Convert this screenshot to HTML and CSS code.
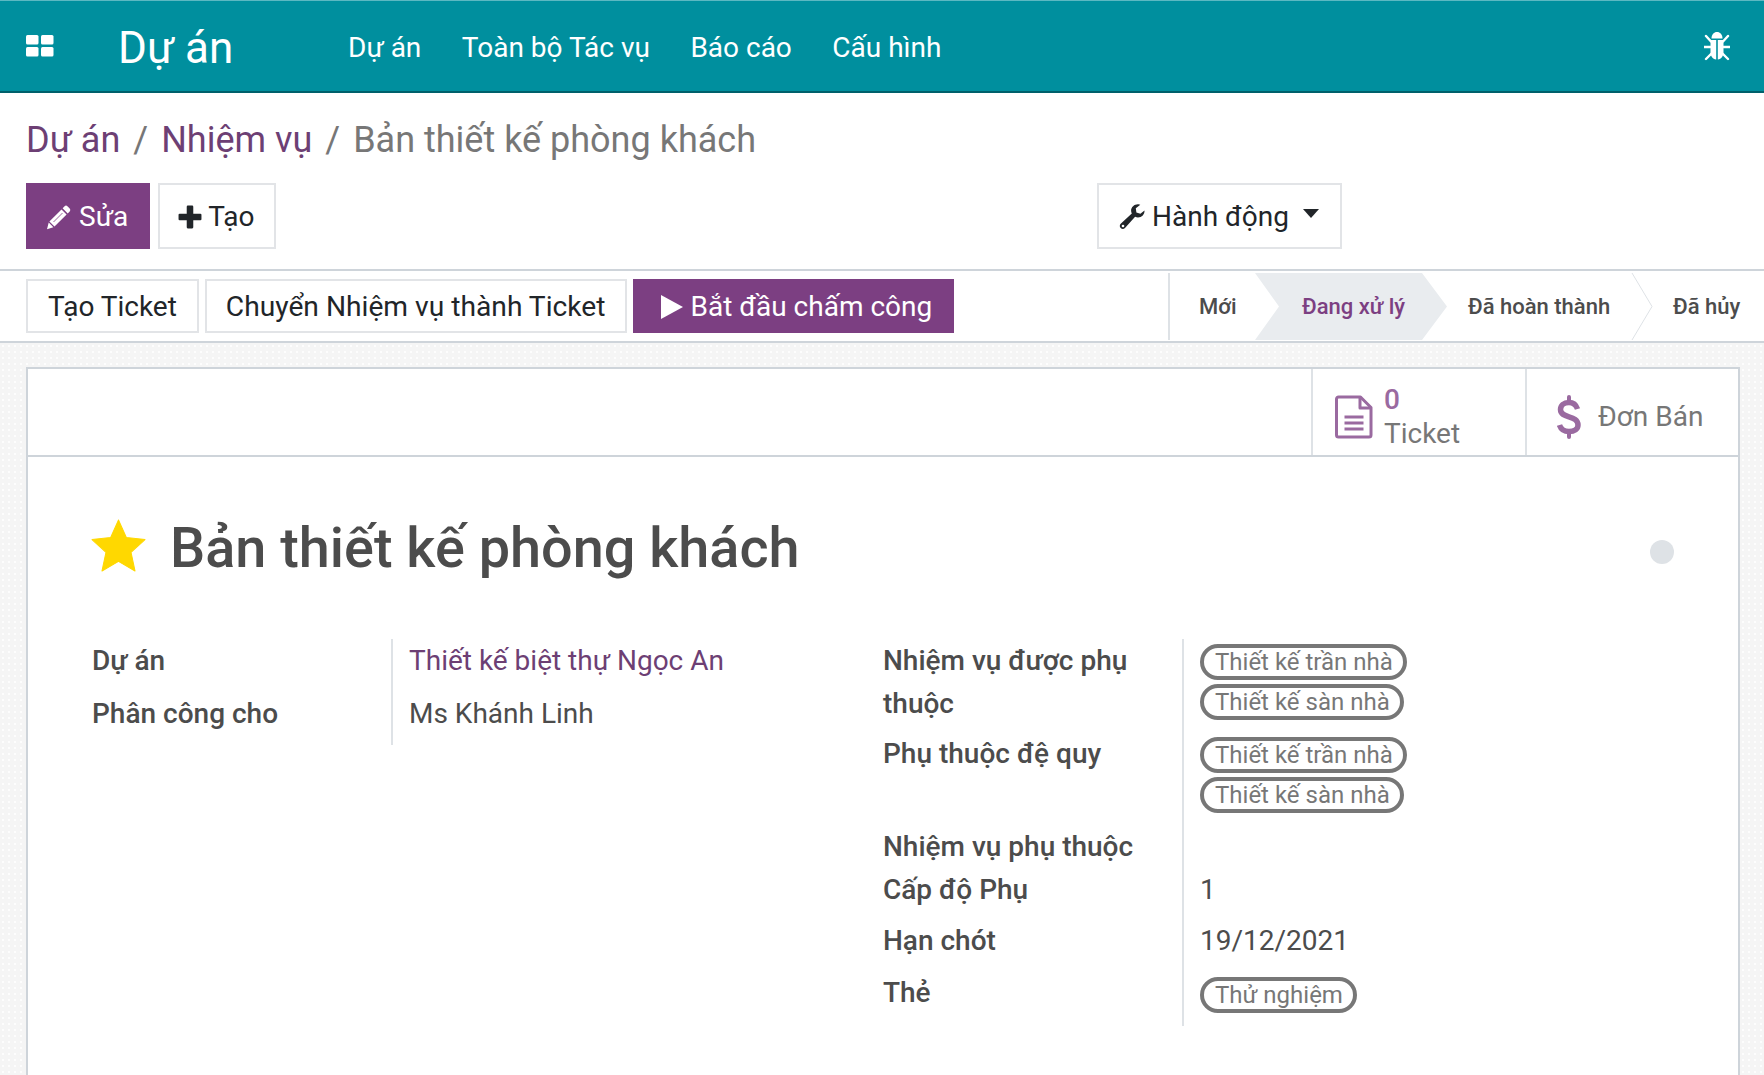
FILE: index.html
```html
<!DOCTYPE html>
<html lang="vi">
<head>
    <meta charset="UTF-8">
    <title>Dự án</title>
    <link rel="stylesheet" href="styles.css">
</head>
<body>

<header class="navbar">
    <svg class="apps-icon" viewBox="0 0 28 22" width="28" height="22"><rect x="0" y="0" width="12.5" height="9.5" rx="1.5"/><rect x="15" y="0" width="12.5" height="9.5" rx="1.5"/><rect x="0" y="12" width="12.5" height="9.5" rx="1.5"/><rect x="15" y="12" width="12.5" height="9.5" rx="1.5"/></svg>
    <a class="brand">Dự án</a>
    <nav class="menu">
        <a>Dự án</a>
        <a>Toàn bộ Tác vụ</a>
        <a>Báo cáo</a>
        <a>Cấu hình</a>
    </nav>
    <svg class="bug-icon" viewBox="0 0 26 30" width="26" height="30">
        <path d="M7.500 7.500C7.500 3.500 10 1 13 1s5.500 2.500 5.500 6.500z"/>
        <path d="M6.500 9h5.700v19.500C8.500 28 6.500 25 6.500 21zM13.800 9h5.700v12c0 4-2 7-5.700 7.500z"/>
        <path d="M2 5l5 5.500M24 5l-5 5.500M0.500 16h6M25.500 16h-6M2 28l5.500-5.500M24 28l-5.500-5.500" fill="none" stroke="#fff" stroke-width="2.400" stroke-linecap="round"/>
    </svg>
</header>

<section class="control-panel">
    <ol class="breadcrumb">
        <li><a>Dự án</a></li>
        <li class="sep">/</li>
        <li><a>Nhiệm vụ</a></li>
        <li class="sep">/</li>
        <li class="current">Bản thiết kế phòng khách</li>
    </ol>
    <div class="cp-buttons">
        <div class="cp-left">
            <button class="btn btn-primary btn-big btn-edit">
                <svg class="icon" viewBox="0 0 26 26" width="26" height="26">
                    <path fill="#fff" d="M18.600 2.300a2 2 0 0 1 2.800 0l2.300 2.300a2 2 0 0 1 0 2.800l-2 2-5.100-5.100zM15.500 5.400l5.100 5.100L8.500 22.600l-5.100-5.100zM2.700 18.600l4.700 4.700L1 25.200z"/>
                    <path d="M7.500 18l9-9" stroke="#7c3f82" stroke-width="0.800" fill="none"/>
                </svg>
                Sửa
            </button>
            <button class="btn btn-big btn-new">
                <svg class="icon" viewBox="1 1 22 22" width="24" height="24"><path fill="#212529" d="M10 1.500h4a1 1 0 0 1 1 1V9h6.500a1 1 0 0 1 1 1v4a1 1 0 0 1-1 1H15v6.500a1 1 0 0 1-1 1h-4a1 1 0 0 1-1-1V15H2.500a1 1 0 0 1-1-1v-4a1 1 0 0 1 1-1H9V2.500a1 1 0 0 1 1-1z"/></svg>
                Tạo
            </button>
        </div>
        <button class="btn btn-big btn-action">
            <svg class="icon" viewBox="0 0 28 28" width="28" height="28">
                <path fill="#212529" d="M26.500 7.500c.3 3.700-2.700 7-6.500 7-1 0-2-.2-2.900-.7L7 25c-1.300 1.300-3.200 1.200-4.300 0-1.200-1.100-1.200-3 0-4.300L13.800 10.500c-.5-1-.7-2-.7-3C13.100 4 16.500 1 20.300 1.200c.8 0 1.300.2 2 .5l-4.500 3.500.6 4.200 4 1.300z"/>
                <circle cx="5" cy="23" r="1.300" fill="#fff"/>
            </svg>
            Hành động
            <span class="caret"></span>
        </button>
    </div>
</section>

<section class="statusbar">
    <div class="status-actions">
        <button class="btn">Tạo Ticket</button>
        <button class="btn btn-convert">Chuyển Nhiệm vụ thành Ticket</button>
        <button class="btn btn-primary btn-start">
            <svg class="icon" viewBox="0 0 24 26" width="24" height="26"><path fill="#fff" d="M1 1l22 12L1 25z"/></svg>
            Bắt đầu chấm công
        </button>
    </div>
    <div class="stages">
        <span class="stage stage-first">Mới</span>
        <span class="stage stage-active">Đang xử lý</span>
        <span class="stage stage-done">Đã hoàn thành</span>
        <svg class="chevron" viewBox="0 0 24 67" width="24" height="67"><path d="M2 0l20 33.500L2 67" fill="none" stroke="#dee2e6" stroke-width="1"/></svg>
        <span class="stage stage-last">Đã hủy</span>
    </div>
</section>

<main class="content">
    <div class="sheet">
        <div class="button-box">
            <a class="stat">
                <svg class="stat-icon" viewBox="0 0 38 44" width="38" height="44">
                    <path d="M3.500 2h22L36 12.500V40a2 2 0 0 1-2 2H3.500a2 2 0 0 1-2-2V4a2 2 0 0 1 2-2z" fill="none" stroke="#9a6aa0" stroke-width="3" stroke-linejoin="round"/>
                    <path d="M25 2v11h11" fill="none" stroke="#9a6aa0" stroke-width="3" stroke-linejoin="round"/>
                    <path d="M9.500 22h19M9.500 28h19M9.500 34h19" stroke="#9a6aa0" stroke-width="3"/>
                </svg>
                <span class="stat-text"><b>0</b><span>Ticket</span></span>
            </a>
            <a class="stat stat-sale">
                <svg class="stat-icon" viewBox="0 0 24 44" width="24" height="44">
                    <path d="M12 2v6M12 36v6" stroke="#9a6aa0" stroke-width="4" stroke-linecap="round"/>
                    <path d="M20.500 14C19 9.500 16 7.500 12 7.500 6.500 7.500 3.500 10.500 3.500 14.500c0 9.500 17.500 5 17.500 15.500 0 4-3.500 6.500-9 6.500-4.500 0-8-2-9.500-6.500" fill="none" stroke="#9a6aa0" stroke-width="5.500"/>
                </svg>
                <span class="stat-label">Đơn Bán</span>
            </a>
        </div>
        <div class="sheet-body">
            <div class="title-row">
                <svg class="star" viewBox="0 0 54 52" width="55" height="53"><path fill="#ffd800" stroke="#ffd800" stroke-width="1" stroke-linejoin="round" d="M27 1l7.700 17.200 18.300 2-13.700 12.500 3.900 18.300L27 41.600 10.800 51l3.900-18.300L1 20.200l18.300-2z"/></svg>
                <h1>Bản thiết kế phòng khách</h1>
                <span class="kanban-dot"></span>
            </div>
            <div class="groups">
                <table class="group group-left">
                    <tr><th>Dự án</th><td><a class="link">Thiết kế biệt thự Ngọc An</a></td></tr>
                    <tr><th>Phân công cho</th><td>Ms Khánh Linh</td></tr>
                </table>
                <table class="group group-right">
                    <tr class="tags-row">
                        <th>Nhiệm vụ được phụ thuộc</th>
                        <td><span class="tag">Thiết kế trần nhà</span><span class="tag">Thiết kế sàn nhà</span></td>
                    </tr>
                    <tr class="tags-row tags-second">
                        <th>Phụ thuộc đệ quy</th>
                        <td><span class="tag">Thiết kế trần nhà</span><span class="tag">Thiết kế sàn nhà</span></td>
                    </tr>
                    <tr class="tight"><th>Nhiệm vụ phụ thuộc</th><td></td></tr>
                    <tr class="level"><th>Cấp độ Phụ</th><td>1</td></tr>
                    <tr><th>Hạn chót</th><td>19/12/2021</td></tr>
                    <tr><th>Thẻ</th><td><span class="tag tag-single">Thử nghiệm</span></td></tr>
                </table>
            </div>
        </div>
    </div>
</main>

</body>
</html>
```

FILE: styles.css
```css
/* Reset */
* {
    margin: 0;
    padding: 0;
    box-sizing: border-box;
}

html, body {
    height: 100%;
    overflow: hidden;
}

body {
    width: 1764px;
    height: 1075px;
    font-family: Roboto, "Noto Sans", sans-serif;
    font-size: 28px;
    color: #4c4c4c;
    background-color: #fff;
    display: flex;
    flex-direction: column;
}

/* Top navbar */
.navbar {
    height: 93px;
    flex: none;
    display: flex;
    align-items: center;
    background-color: #008f9e;
    border-top: 1px solid #5cb8c2;
    border-bottom: 2px solid #00606b;
    padding: 0 34px 0 26px;
    color: #fff;
}

.apps-icon {
    fill: #fff;
    flex: none;
}

.brand {
    font-size: 44px;
    margin-left: 64px;
    width: 230px;
    padding-top: 3px;
}

.menu {
    display: flex;
    gap: 40.5px;
    padding-top: 3px;
}

.bug-icon {
    fill: #fff;
    margin-left: auto;
}

/* Breadcrumb and main buttons */
.control-panel {
    height: 178px;
    flex: none;
    border-bottom: 2px solid #ced4da;
    padding: 21px 26px 0;
}

.breadcrumb {
    display: flex;
    list-style: none;
    font-size: 36px;
    line-height: 52px;
    gap: 13px;
    color: #777;
}

.breadcrumb a {
    color: #6d3f74;
}

.cp-buttons {
    display: flex;
    margin-top: 17px;
}

.cp-left {
    display: flex;
    gap: 8px;
    width: 1071px;
}

.btn {
    display: flex;
    align-items: center;
    gap: 7px;
    height: 54px;
    padding: 1px 20px 0;
    font-family: inherit;
    font-size: 28px;
    color: #212529;
    background-color: #fff;
    border: 2px solid #e2e4e7;
}

.btn-big {
    height: 66px;
}

.btn-edit {
    padding: 1px 20px 0 18px;
}

.btn-new {
    padding: 1px 19px 0 18px;
    gap: 6px;
}

.btn-primary {
    color: #fff;
    background-color: #7c3f82;
    border-color: #7c3f82;
}

.btn-convert {
    padding: 1px 20px 0 19px;
    font-size: 28.2px;
}

.btn-start {
    padding: 1px 20px 0 25px;
    gap: 6px;
}

.btn-action {
    padding: 1px 18px 0 19px;
    width: 245px;
    gap: 6px;
}

.caret {
    margin-left: 8px;
    margin-bottom: 6px;
    border-top: 9px solid #212529;
    border-left: 8px solid transparent;
    border-right: 8px solid transparent;
}

/* Status bar */
.statusbar {
    height: 72px;
    flex: none;
    display: flex;
    justify-content: space-between;
    padding-left: 26px;
    border-bottom: 2px solid #ced4da;
}

.status-actions {
    display: flex;
    gap: 6px;
    padding-top: 8px;
}

.stages {
    display: flex;
    align-items: center;
    width: 596px;
    height: 67px;
    margin-top: 2px;
    border-left: 2px solid #dee2e6;
    font-size: 22px;
    font-weight: 500;
    color: #4c4c4c;
}

.stage {
    height: 100%;
    display: flex;
    align-items: center;
    flex: none;
}

.stage-first {
    padding-left: 29px;
    width: 85px;
}

.stage-active {
    width: 192px;
    padding-left: 47px;
    color: #7c3f82;
    background-color: #e9ecef;
    clip-path: polygon(0 0, 167px 0, 100% 50%, 167px 100%, 0 100%, 24px 50%);
}

.stage-done {
    width: 187px;
    padding-left: 21px;
}

.stage-last {
    padding-left: 19px;
}

.chevron {
    flex: none;
    margin-left: -4px;
}

/* Form sheet */
.content {
    flex: 1;
    padding: 24px 24px 0 26px;
    background-color: #f5f5f5;
    background-image: radial-gradient(#fdfdfd 1.5px, transparent 1.5px);
    background-size: 6px 6px;
    min-height: 0;
}

.sheet {
    height: 100%;
    background-color: #fff;
    border: 2px solid #ced4da;
    border-bottom: none;
}

.button-box {
    height: 88px;
    display: flex;
    justify-content: flex-end;
    border-bottom: 2px solid #ced4da;
    color: #777;
}

.stat {
    display: flex;
    align-items: center;
    gap: 11px;
    width: 214px;
    padding-left: 22px;
    padding-top: 10px;
    border-left: 2px solid #dee2e6;
}

.stat-sale {
    width: 213px;
    padding-left: 30px;
    gap: 17px;
}

.stat-label {
    margin-top: -1px;
}

.stat-text {
    display: flex;
    flex-direction: column;
    line-height: 34px;
}

.stat-text b {
    color: #9a6aa0;
    font-weight: 500;
}

.sheet-body {
    padding: 0 56px 0 64px;
}

.title-row {
    display: flex;
    align-items: center;
    height: 90px;
    margin-top: 46px;
}

.star {
    flex: none;
    margin-left: -1px;
    margin-top: -6px;
}

.title-row h1 {
    font-size: 55.8px;
    font-weight: 500;
    margin-left: 24px;
    line-height: 90px;
}

.kanban-dot {
    width: 24px;
    height: 24px;
    border-radius: 50%;
    background-color: #dee2e6;
    margin-left: auto;
    margin-right: 8px;
    margin-top: 8px;
}

.groups {
    display: flex;
    margin-top: 46px;
}

.group {
    border-collapse: collapse;
    align-self: flex-start;
}

.group th {
    font-weight: 500;
    text-align: left;
    vertical-align: top;
    line-height: 43px;
    padding-bottom: 9px;
    padding-right: 16px;
}

.group td {
    vertical-align: top;
    line-height: 43px;
    padding-left: 16px;
    padding-bottom: 9px;
    border-left: 2px solid #dee2e6;
}

.group-left {
    width: 791px;
}

.group-left th {
    width: 300px;
}

.group-left th, .group-left td {
    padding-bottom: 10px;
}

.group-right th {
    width: 300px;
}

.group-right .tags-row th, .group-right .tags-row td {
    padding-bottom: 7px;
}

.group-right .tags-second th, .group-right .tags-second td {
    padding-bottom: 8px;
}

.group-right .tight th, .group-right .tight td {
    padding-bottom: 0;
}

.group-right .level th, .group-right .level td {
    padding-bottom: 8px;
}

.tag {
    display: block;
    width: fit-content;
    height: 36px;
    line-height: 28px;
    margin-top: 5px;
    margin-bottom: 4px;
    padding: 0 10px 0 11px;
    font-size: 24px;
    color: #777;
    border: 4px solid #777;
    border-radius: 18px;
}

.tag + .tag {
    margin-top: 0;
}

.tag-single {
    margin-top: 6px;
}

.link {
    color: #6d3f74;
}
```
